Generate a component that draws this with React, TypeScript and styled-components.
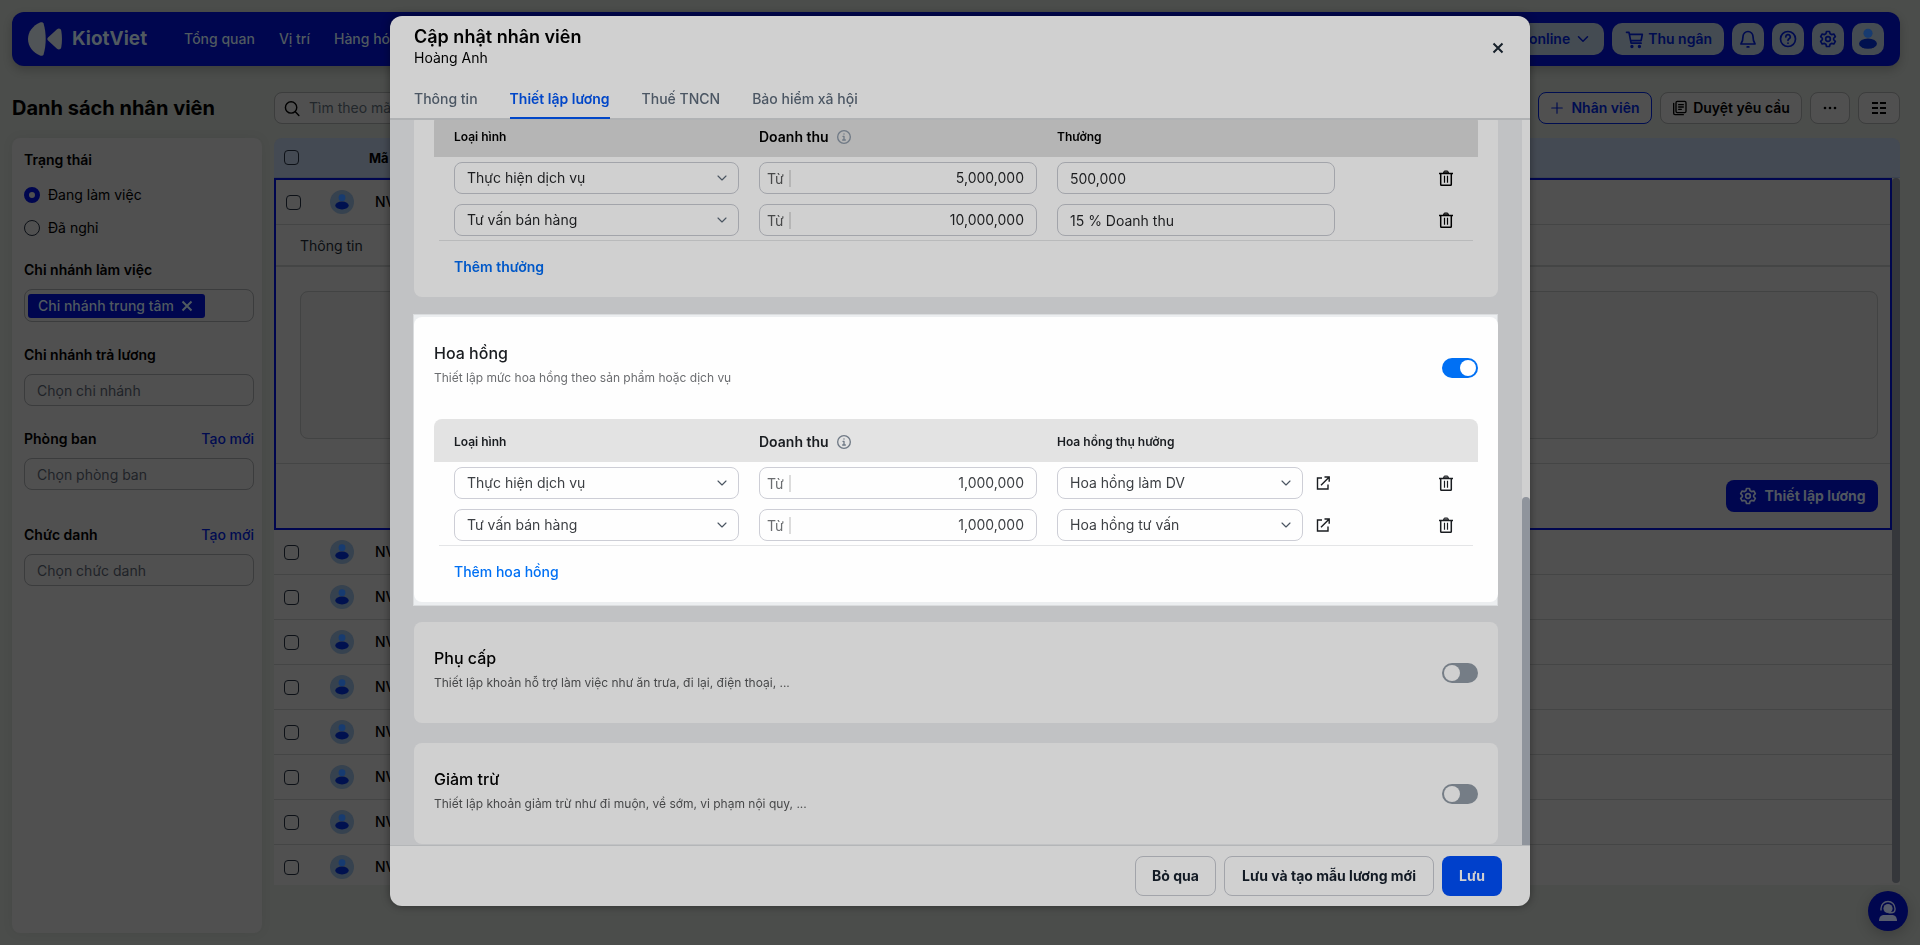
import React from "react";
import styled, { createGlobalStyle, css } from "styled-components";

const Global = createGlobalStyle`
  *, *::before, *::after { box-sizing: border-box; }
  html, body { height: 100%; }
  body {
    margin: 0;
    overflow: hidden;
    background: #4b4d4b;
    font-family: Inter, "Liberation Sans", sans-serif;
    font-size: 14px;
    line-height: 20px;
    color: #000;
  }
  button, input, select { font: inherit; color: inherit; margin: 0; }
  button { cursor: pointer; }
  h1, h2, h3, p, fieldset { margin: 0; padding: 0; border: 0; }
  svg { display: block; flex: none; }
  a { text-decoration: none; }
`;

const navy = "#00064f";

/* ---------- icons ---------- */

type IconProps = { size?: number; w?: number };
const Svg = ({ size = 20, w = 2, children }: IconProps & { children: React.ReactNode }) => (
  <svg width={size} height={size} viewBox="0 0 24 24" fill="none" stroke="currentColor" strokeWidth={w} strokeLinecap="round" strokeLinejoin="round" aria-hidden="true">
    {children}
  </svg>
);
const Chevron = (p: IconProps) => <Svg {...p}><path d="M6 9l6 6 6-6" /></Svg>;
const Cart = () => (
  <Svg size={20} w={2}>
    <path d="M3 4h3l2.500 13h12M6.500 6.500H22L20.500 14H8" /><circle cx="9.500" cy="21" r="1" fill="currentColor" /><circle cx="18.500" cy="21" r="1" fill="currentColor" />
  </Svg>
);
const Bell = () => (
  <Svg size={20} w={2}>
    <path d="M12 3a6 6 0 0 0-6 6c0 4.500-1 7-2.500 9h17C19 16 18 13.500 18 9a6 6 0 0 0-6-6zM11 21.500h2" />
  </Svg>
);
const Help = () => (
  <Svg size={20} w={2}>
    <circle cx="12" cy="12" r="9" /><path d="M9.300 9.500a2.700 2.700 0 1 1 4 2.300c-.9.500-1.300 1-1.300 2M12 16.800v.2" />
  </Svg>
);
const Gear = () => (
  <Svg size={20} w={2}>
    <circle cx="12" cy="12" r="2.800" />
    <path d="M10.200 3h3.600l.7 2.700 1.800 1 2.700-.7 1.800 3.100-2 2v1.800l2 2-1.800 3.100-2.700-.7-1.800 1-.7 2.700h-3.600l-.7-2.700-1.800-1-2.700.7-1.800-3.100 2-2v-1.800l-2-2L5 6l2.700.7 1.800-1z" />
  </Svg>
);
const Search = () => <Svg size={17} w={2}><circle cx="10" cy="10.500" r="8" /><path d="M16 16.500L21 22" /></Svg>;
const Plus = () => <Svg size={14} w={2}><path d="M12 3v18M3 12h18" /></Svg>;
const Docs = () => (
  <Svg size={16} w={2}>
    <rect x="6" y="2" width="15" height="17" rx="2" /><path d="M2.500 5v15a2 2 0 0 0 2 2H17M10 7h7M10 10.500h7M10 14h4" />
  </Svg>
);
const Dots = () => (
  <svg width="14" height="14" viewBox="0 0 14 14" aria-hidden="true"><circle cx="2" cy="7" r="1.300" /><circle cx="7" cy="7" r="1.300" /><circle cx="12" cy="7" r="1.300" /></svg>
);
const Columns = () => (
  <svg width="16" height="14" viewBox="0 0 16 14" aria-hidden="true"><path d="M1 1h6v2H1zM9 1h6v2H9zM1 6h6v2H1zM9 6h6v2H9zM1 11h6v2H1zM9 11h6v2H9z" /></svg>
);
const Cross = ({ size = 12 }: IconProps) => (
  <svg width={size} height={size} viewBox="0 0 12 12" fill="none" stroke="currentColor" strokeWidth="2" aria-hidden="true"><path d="M1.500 1.500l9 9M10.500 1.500l-9 9" /></svg>
);
const Info = () => (
  <Svg size={16} w={2}><circle cx="12" cy="12" r="9.500" /><path d="M10.500 11H12v5.500M10 16.500h4M12 7.200v.3" /></Svg>
);
const External = () => (
  <svg width="14" height="14" viewBox="0 0 14 14" fill="none" stroke="currentColor" strokeWidth="1.400" aria-hidden="true">
    <path d="M6 2H1.500v11h10.500V8.500M8.500 1h4.700v4.700M13 1.200L5 9.200" />
  </svg>
);
const Trash = () => (
  <svg width="14" height="16" viewBox="0 0 14 16" fill="none" stroke="currentColor" aria-hidden="true">
    <path d="M0 3.500h14M1.700 3.500v11q0 .8.800.8h9q.8 0 .8-.8v-11" strokeWidth="1.500" />
    <path d="M5.500 5.800v7M8.500 5.800v7" strokeWidth="1.200" />
    <path d="M4.500 3l.8-2h3.400l.8 2z" fill="currentColor" fillOpacity="0.500" strokeWidth="1" />
  </svg>
);
const Logo = () => (
  <svg width="34" height="34" viewBox="0 0 34 34" fill="#505457" aria-hidden="true">
    <path d="M12 .4C5 3.500 0 9.500 0 17s5 13.500 12 16.600c1.500.6 3 .2 3.600-1.200 2.800-9.600 2.800-21.200 0-30.800C15 .2 13.500-.2 12 .4z" />
    <path d="M20 15.500l9-8.300c1.800-1.500 3.800-.7 4.300 1.500.9 5.500.9 11.100 0 16.600-.5 2.200-2.500 3-4.300 1.500l-9-8.300c-.9-.8-.9-2.200 0-3z" />
  </svg>
);
const Person = ({ size = 24 }: IconProps) => (
  <svg width={size} height={size} viewBox="0 0 24 24" aria-hidden="true">
    <circle cx="12" cy="7.700" r="3.400" fill="#173b70" /><ellipse cx="12" cy="15.500" rx="6.700" ry="3.900" fill="#00114f" />
  </svg>
);
const Agent = () => (
  <svg width="20" height="22" viewBox="0 0 20 22" aria-hidden="true">
    <circle cx="10" cy="8.500" r="4.600" fill="#565b6b" />
    <path d="M3 10.500V8.500a7 7 0 0 1 14 0v1c0 2-1.500 3.200-4 3.200H10.500" fill="none" stroke="#565b6b" strokeWidth="1.400" />
    <path d="M1 21c0-4 2-6 5-6h8c3 0 5 2 5 6z" fill="#565b6b" />
  </svg>
);

/* ---------- page behind the dialog ---------- */

const Page = styled.div`
  height: 100vh;
  display: flex;
  flex-direction: column;
  padding: 12px 20px 12px 12px;
`;
const TopBar = styled.header`
  display: flex;
  align-items: center;
  height: 54px;
  flex: none;
  padding: 0 16px;
  border-radius: 12px;
  background: ${navy};
  color: #505a60;
  box-shadow: 0 4px 10px rgba(0, 0, 0, 0.2);
`;
const Brand = styled.a`
  display: flex;
  align-items: center;
  gap: 10px;
  color: #505a60;
  font-size: 19px;
  font-weight: 700;
`;
const Nav = styled.nav`
  display: flex;
  gap: 24px;
  margin-left: 37px;
  a { color: inherit; font-weight: 500; }
`;
const TopActions = styled.div`
  display: flex;
  gap: 8px;
  margin-left: auto;
`;
const TopButton = styled.button<{ $square?: boolean }>`
  display: flex;
  align-items: center;
  justify-content: center;
  gap: 4px;
  height: 32px;
  width: ${(p) => (p.$square ? "32px" : "auto")};
  padding: ${(p) => (p.$square ? "0" : "0 12px")};
  border: 0;
  border-radius: 10px;
  background: #444b52;
  color: #000b50;
  font-weight: 600;
`;
const Main = styled.div`
  flex: 1;
  min-height: 0;
  display: grid;
  grid-template-columns: 250px minmax(0, 1fr);
  grid-template-rows: 32px minmax(0, 1fr);
  gap: 14px 12px;
  padding-top: 26px;
`;
const PageTitle = styled.h1`
  font-size: 20px;
  line-height: 32px;
  font-weight: 700;
  white-space: nowrap;
`;
const Tools = styled.div`
  display: flex;
  gap: 8px;
`;
const SearchBox = styled.label`
  display: flex;
  align-items: center;
  gap: 6px;
  width: 400px;
  height: 32px;
  margin-right: auto;
  padding: 0 9px;
  border: 1px solid #3c3d3d;
  border-radius: 8px;
  background: #505050;
  input {
    flex: 1;
    border: 0;
    background: none;
    outline: none;
    &::placeholder { color: #22272b; opacity: 1; }
  }
`;
const ToolButton = styled.button<{ $accent?: boolean; $width: number }>`
  display: flex;
  align-items: center;
  justify-content: center;
  gap: ${(p) => (p.$accent ? 7 : 5)}px;
  width: ${(p) => p.$width}px;
  height: 32px;
  padding: 0;
  border: 1px solid ${(p) => (p.$accent ? "#000d50" : "#3c3d3d")};
  border-radius: 8px;
  background: #505050;
  color: ${(p) => (p.$accent ? "#000d50" : "#000")};
  font-weight: 600;
`;
const Sidebar = styled.aside`
  padding: 12px 8px 12px 12px;
  border-radius: 8px;
  background: #505050;
  box-shadow: 0 0 12px rgba(0, 0, 0, 0.06);
`;
const Group = styled.fieldset<{ $gap: number }>`
  min-width: 0;
  margin-bottom: ${(p) => p.$gap}px;
`;
const GroupHead = styled.div<{ $tight?: boolean }>`
  display: flex;
  justify-content: space-between;
  margin-bottom: ${(p) => (p.$tight ? 8 : 9)}px;
  line-height: 20px;
  label, span { font-weight: 600; }
  a { color: #000b50; font-weight: 500; }
`;
const RadioLine = styled.label`
  display: flex;
  align-items: center;
  gap: 8px;
  height: 33px;
`;
const Radio = styled.input`
  appearance: none;
  width: 16px;
  height: 16px;
  border: 1px solid #0d1117;
  border-radius: 50%;
  &:checked { border: 5px solid ${navy}; background: #505050; }
`;
const Field = styled.input`
  display: block;
  width: 100%;
  height: 32px;
  padding: 0 12px;
  border: 1px solid #3b3c3d;
  border-radius: 8px;
  background: none;
  &::placeholder { color: #1f2328; opacity: 1; }
`;
const TagBox = styled.div`
  display: flex;
  align-items: center;
  height: 33px;
  padding: 0 3px;
  border: 1px solid #3b3c3d;
  border-radius: 8px;
`;
const Tag = styled.span`
  display: flex;
  align-items: center;
  gap: 7px;
  height: 24px;
  padding: 0 12px 0 10px;
  border-radius: 3px;
  background: ${navy};
  color: #505a60;
  font-weight: 500;
  button { display: flex; padding: 0; border: 0; background: none; color: inherit; }
`;
const Grid = styled.div`
  align-self: start;
  height: 747px;
  overflow: hidden;
  border-radius: 8px 8px 0 0;
`;
const GridHead = styled.div`
  display: flex;
  align-items: center;
  height: 40px;
  padding-left: 10px;
  border-bottom: 1px solid #3b4350;
  background: #444a53;
  font-size: 13px;
  font-weight: 700;
`;
const GridBody = styled.div`
  display: flex;
  background: #505050;
`;
const Rows = styled.div`
  flex: 1;
  min-width: 0;
`;
const GridScroll = styled.div`
  width: 8px;
  height: 705px;
  border-radius: 4px;
  background: #35373b;
`;
const Check = styled.input`
  appearance: none;
  width: 15px;
  height: 15px;
  border: 1px solid #0d1117;
  border-radius: 4px;
`;
const HeadLabel = styled.span`
  margin-left: 70px;
`;
const Avatar = styled.span`
  display: flex;
  border-radius: 50%;
  background: #36424f;
`;
const Row = styled.div<{ $framed?: boolean }>`
  display: grid;
  grid-template-columns: ${(p) => (p.$framed ? 44 : 46)}px 45px 1fr;
  align-items: center;
  justify-items: start;
  height: 45px;
  padding-left: 10px;
  border-bottom: 1px solid #444545;
  font-weight: 500;
`;
const Selected = styled.div`
  height: 352px;
  border: 2px solid ${navy};
`;
const SelectedTab = styled.div`
  height: 42px;
  padding: 11px 24px 0;
  border-bottom: 2px solid #444545;
  color: #0b0e12;
`;
const DetailBox = styled.div`
  height: 148px;
  margin: 24px 12px 24px 24px;
  border: 1px solid #424343;
  border-radius: 8px;
  background: #4e4e4e;
`;
const DetailFoot = styled.div`
  display: flex;
  justify-content: flex-end;
  padding: 16px 12px;
  border-top: 1px solid #444545;
`;
const PayButton = styled.button`
  display: flex;
  align-items: center;
  justify-content: center;
  gap: 6px;
  width: 152px;
  height: 32px;
  padding: 0;
  border: 0;
  border-radius: 8px;
  background: ${navy};
  color: #50565f;
  font-weight: 700;
`;
const ChatButton = styled.button`
  position: fixed;
  right: 12px;
  bottom: 14px;
  display: flex;
  align-items: center;
  justify-content: center;
  width: 40px;
  height: 40px;
  padding: 0;
  border: 0;
  border-radius: 50%;
  background: ${navy};
  box-shadow: 0 4px 14px rgba(0, 0, 0, 0.2);
`;

/* ---------- dialog ---------- */

const Overlay = styled.div`
  position: fixed;
  inset: 0;
  display: flex;
  justify-content: center;
  padding: 16px 20px 39px;
`;
const Dialog = styled.section`
  display: flex;
  flex-direction: column;
  width: 1140px;
  max-width: 100%;
  overflow: hidden;
  border-radius: 12px;
  background: #d0d0d0;
  box-shadow: 0 0 8px rgba(0, 0, 0, 0.4);
`;
const DialogHead = styled.div`
  display: flex;
  align-items: flex-start;
  justify-content: space-between;
  height: 65px;
  padding: 9px 24px 0;
  h2 { font-size: 18px; line-height: 24px; font-weight: 600; }
  p { line-height: 18px; }
`;
const CloseButton = styled.button`
  display: flex;
  margin-top: 15px;
  padding: 2px;
  border: 0;
  background: none;
  color: #16202a;
`;
const Tabs = styled.nav`
  display: flex;
  gap: 32px;
  height: 39px;
  padding: 0 24px;
  border-bottom: 2px solid #b0b2b4;
`;
const Tab = styled.a<{ $active?: boolean }>`
  height: 38px;
  line-height: 36px;
  font-weight: ${(p) => (p.$active ? 600 : 500)};
  color: ${(p) => (p.$active ? "#0046c8" : "#4b5663")};
  border-bottom: 2px solid ${(p) => (p.$active ? "#0046c8" : "transparent")};
`;
const Body = styled.div`
  flex: 1;
  min-height: 0;
  display: flex;
  background: #c1c2c4;
`;
const Cards = styled.div`
  flex: 1;
  min-width: 0;
  display: flex;
  flex-direction: column;
  justify-content: flex-end;
  gap: 20px;
  padding: 0 24px 1px;
  overflow: hidden;
`;
const Track = styled.div`
  display: flex;
  flex-direction: column;
  justify-content: flex-end;
  width: 8px;
  background: #d0d0d0;
`;
const Thumb = styled.div`
  height: 48%;
  border-radius: 4px 4px 0 0;
  background: #8f949c;
`;
const Card = styled.section`
  flex: none;
  padding: 0 20px;
  border-radius: 8px;
  background: #d0d0d0;
`;
const Spotlight = styled.div`
  flex: none;
  margin: -3px 0 -4px -1px;
  padding: 3px 0 4px 1px;
  background: #eceef0;
  box-shadow: inset 0 0 0 1px #dadcde;
`;
const LitCard = styled(Card)`
  background: #fefefe;
  color: #1a1d21;
`;
const CardHead = styled.div<{ $lit?: boolean }>`
  display: flex;
  align-items: center;
  justify-content: space-between;
  height: ${(p) => (p.$lit ? 102 : 101)}px;
  h3 { font-size: 16px; line-height: 22px; font-weight: 500; }
  p { margin-top: 5px; font-size: 12px; line-height: 18px; }
`;
const HeadText = styled.div<{ $lit?: boolean }>`
  padding-bottom: ${(p) => (p.$lit ? 8 : 6)}px;
  p { color: ${(p) => (p.$lit ? "#6b6d70" : "#474849")}; }
`;
const Switch = styled.input`
  appearance: none;
  display: flex;
  width: 36px;
  height: 20px;
  padding: 2px;
  border-radius: 10px;
  background: #757d86;
  &::before { content: ""; width: 16px; height: 16px; border-radius: 50%; background: #d0d0d0; }
  &:checked { justify-content: flex-end; background: #0070f4; }
  &:checked::before { background: #fff; }
`;
const Table = styled.table<{ $lit?: boolean }>`
  width: 100%;
  border-collapse: collapse;
  table-layout: fixed;
  th {
    height: 43px;
    padding: 2px 10px 0;
    background: ${(p) => (p.$lit ? "#e3e3e3" : "#b5b5b5")};
    font-size: 12px;
    font-weight: 600;
    text-align: left;
  }
  td { height: 42px; padding: 5px 10px; }
  th:first-child, td:first-child { padding-left: 20px; }
  th:first-child { border-top-left-radius: 8px; }
  th:last-child { border-top-right-radius: 8px; }
`;
const RevenueHead = styled.span`
  display: flex;
  align-items: center;
  gap: 7px;
  font-size: 14px;
  svg { color: #6f7985; }
`;
const boxed = css<{ $lit?: boolean }>`
  height: 32px;
  border: 1px solid ${(p) => (p.$lit ? "#cdced6" : "#a2a4aa")};
  border-radius: 8px;
  background: none;
  color: ${(p) => (p.$lit ? "#3c3f43" : "#1c1d1f")};
`;
const SelectWrap = styled.div`
  position: relative;
  flex: 1;
  svg { position: absolute; right: 9px; top: 8px; pointer-events: none; color: #4a5561; }
`;
const Select = styled.select<{ $lit?: boolean }>`
  ${boxed}
  display: block;
  appearance: none;
  width: 100%;
  padding: 0 12px;
`;
const Amount = styled.label<{ $lit?: boolean }>`
  ${boxed}
  display: flex;
  align-items: center;
  padding: 0 12px 0 7px;
  span {
    padding-right: 5px;
    border-right: 2px solid ${(p) => (p.$lit ? "#dcdcdc" : "#b5b5b5")};
    line-height: 17px;
    color: ${(p) => (p.$lit ? "#6b6d70" : "#474849")};
  }
  input { flex: 1; min-width: 0; padding: 0; border: 0; background: none; text-align: right; }
`;
const Plain = styled.input<{ $lit?: boolean }>`
  ${boxed}
  display: block;
  width: 100%;
  padding: 0 12px;
`;
const Linked = styled.div`
  display: flex;
  align-items: center;
  gap: 13px;
  padding-right: 5px;
`;
const IconButton = styled.button`
  display: flex;
  padding: 0;
  border: 0;
  background: none;
  color: inherit;
`;
const TrashCell = styled.div`
  display: flex;
  justify-content: flex-end;
  padding-right: 15px;
`;
const AddLine = styled.div<{ $lit?: boolean }>`
  display: flex;
  align-items: center;
  height: 57px;
  margin: -1px 5px 0;
  padding: 0 15px 4px;
  border-top: 1px solid ${(p) => (p.$lit ? "#e4e5e7" : "#b9babb")};
  button {
    padding: 0;
    border: 0;
    background: none;
    color: ${(p) => (p.$lit ? "#0070f4" : "#0058c8")};
    font-weight: ${(p) => (p.$lit ? 500 : 600)};
  }
`;
const Foot = styled.footer`
  display: flex;
  justify-content: flex-end;
  gap: 8px;
  height: 61px;
  padding: 10px 28px 0;
  border-top: 1px solid #b4b6b8;
`;
const FootButton = styled.button<{ $primary?: boolean; $width: number }>`
  width: ${(p) => p.$width}px;
  height: 40px;
  padding: 0;
  border: ${(p) => (p.$primary ? "0" : "1px solid #a2a4aa")};
  border-radius: 8px;
  background: ${(p) => (p.$primary ? "#0040cb" : "none")};
  color: ${(p) => (p.$primary ? "#d0d0d0" : "#121a24")};
  font-weight: 700;
`;

type Line = { kind: string; from: string; reward: string };

const bonusLines: Line[] = [
  { kind: "Thực hiện dịch vụ", from: "5,000,000", reward: "500,000" },
  { kind: "Tư vấn bán hàng", from: "10,000,000", reward: "15 % Doanh thu" },
];
const commissionLines: Line[] = [
  { kind: "Thực hiện dịch vụ", from: "1,000,000", reward: "Hoa hồng làm DV" },
  { kind: "Tư vấn bán hàng", from: "1,000,000", reward: "Hoa hồng tư vấn" },
];

const Picker = ({ value, label, lit }: { value: string; label: string; lit?: boolean }) => (
  <SelectWrap>
    <Select $lit={lit} aria-label={label} defaultValue={value}>
      <option>{value}</option>
    </Select>
    <Chevron size={16} w={1.7} />
  </SelectWrap>
);

const PayTable = ({ lines, rewardLabel, lit }: { lines: Line[]; rewardLabel: string; lit?: boolean }) => (
  <Table $lit={lit}>
    <colgroup>
      <col width="315" />
      <col width="298" />
      <col width="298" />
      <col />
    </colgroup>
    <thead>
      <tr>
        <th>Loại hình</th>
        <th><RevenueHead>Doanh thu <Info /></RevenueHead></th>
        <th>{rewardLabel}</th>
        <th aria-label="Xóa" />
      </tr>
    </thead>
    <tbody>
      {lines.map((line) => (
        <tr key={line.kind}>
          <td><Picker lit={lit} value={line.kind} label="Loại hình" /></td>
          <td><Amount $lit={lit}><span>Từ</span><input aria-label="Doanh thu" defaultValue={line.from} /></Amount></td>
          <td>
            {lit ? (
              <Linked>
                <Picker lit value={line.reward} label={rewardLabel} />
                <IconButton aria-label="Mở"><External /></IconButton>
              </Linked>
            ) : (
              <Plain aria-label={rewardLabel} defaultValue={line.reward} />
            )}
          </td>
          <td><TrashCell><IconButton aria-label="Xóa"><Trash /></IconButton></TrashCell></td>
        </tr>
      ))}
    </tbody>
  </Table>
);

const SectionHead = ({ title, note, on }: { title: string; note: string; on?: boolean }) => (
  <CardHead $lit={on}>
    <HeadText $lit={on}>
      <h3>{title}</h3>
      <p>{note}</p>
    </HeadText>
    <Switch type="checkbox" role="switch" aria-label={title} defaultChecked={on} />
  </CardHead>
);

const StaffRow = ({ framed }: { framed?: boolean }) => (
  <Row $framed={framed}>
    <Check type="checkbox" aria-label="Chọn nhân viên" />
    <Avatar><Person /></Avatar>
    <span>NV</span>
  </Row>
);

export default function App() {
  return (
    <>
      <Global />
      <Page>
        <TopBar>
          <Brand href="#"><Logo />KiotViet</Brand>
          <Nav>
            <a href="#">Tổng quan</a>
            <a href="#">Vị trí</a>
            <a href="#">Hàng hóa</a>
          </Nav>
          <TopActions>
            <TopButton>Bán online <Chevron size={18} w={2} /></TopButton>
            <TopButton><Cart />Thu ngân</TopButton>
            <TopButton $square aria-label="Thông báo"><Bell /></TopButton>
            <TopButton $square aria-label="Trợ giúp"><Help /></TopButton>
            <TopButton $square aria-label="Thiết lập"><Gear /></TopButton>
            <TopButton $square aria-label="Tài khoản"><Person size={32} /></TopButton>
          </TopActions>
        </TopBar>
        <Main>
          <PageTitle>Danh sách nhân viên</PageTitle>
          <Tools>
            <SearchBox><Search /><input aria-label="Tìm kiếm" placeholder="Tìm theo mã, tên nhân viên" /></SearchBox>
            <ToolButton $accent $width={114}><Plus />Nhân viên</ToolButton>
            <ToolButton $width={142}><Docs />Duyệt yêu cầu</ToolButton>
            <ToolButton $width={40} aria-label="Thêm"><Dots /></ToolButton>
            <ToolButton $width={42} aria-label="Cột hiển thị"><Columns /></ToolButton>
          </Tools>
          <Sidebar>
            <Group $gap={16}>
              <GroupHead $tight><span>Trạng thái</span></GroupHead>
              <RadioLine><Radio type="radio" name="status" defaultChecked />Đang làm việc</RadioLine>
              <RadioLine><Radio type="radio" name="status" />Đã nghỉ</RadioLine>
            </Group>
            <Group $gap={23}>
              <GroupHead><span>Chi nhánh làm việc</span></GroupHead>
              <TagBox><Tag>Chi nhánh trung tâm <button aria-label="Bỏ chọn"><Cross size={12} /></button></Tag></TagBox>
            </Group>
            <Group $gap={23}>
              <GroupHead><label htmlFor="branch">Chi nhánh trả lương</label></GroupHead>
              <Field id="branch" placeholder="Chọn chi nhánh" />
            </Group>
            <Group $gap={35}>
              <GroupHead><label htmlFor="dept">Phòng ban</label><a href="#">Tạo mới</a></GroupHead>
              <Field id="dept" placeholder="Chọn phòng ban" />
            </Group>
            <Group $gap={0}>
              <GroupHead><label htmlFor="role">Chức danh</label><a href="#">Tạo mới</a></GroupHead>
              <Field id="role" placeholder="Chọn chức danh" />
            </Group>
          </Sidebar>
          <Grid>
            <GridHead><Check type="checkbox" aria-label="Chọn tất cả" /><HeadLabel>Mã nhân viên</HeadLabel></GridHead>
            <GridBody>
              <Rows>
                <Selected>
                  <StaffRow framed />
                  <SelectedTab>Thông tin</SelectedTab>
                  <DetailBox />
                  <DetailFoot><PayButton><Gear />Thiết lập lương</PayButton></DetailFoot>
                </Selected>
                {Array.from({ length: 8 }, (_, i) => <StaffRow key={i} />)}
              </Rows>
              <GridScroll />
            </GridBody>
          </Grid>
        </Main>
      </Page>
      <ChatButton aria-label="Hỗ trợ"><Agent /></ChatButton>

      <Overlay>
        <Dialog role="dialog" aria-labelledby="dialog-title">
          <DialogHead>
            <div>
              <h2 id="dialog-title">Cập nhật nhân viên</h2>
              <p>Hoàng Anh</p>
            </div>
            <CloseButton aria-label="Đóng"><Cross size={12} /></CloseButton>
          </DialogHead>
          <Tabs>
            <Tab href="#">Thông tin</Tab>
            <Tab href="#" $active>Thiết lập lương</Tab>
            <Tab href="#">Thuế TNCN</Tab>
            <Tab href="#">Bảo hiểm xã hội</Tab>
          </Tabs>
          <Body>
            <Cards>
              <Card>
                <PayTable lines={bonusLines} rewardLabel="Thưởng" />
                <AddLine><button>Thêm thưởng</button></AddLine>
              </Card>
              <Spotlight>
                <LitCard>
                  <SectionHead on title="Hoa hồng" note="Thiết lập mức hoa hồng theo sản phẩm hoặc dịch vụ" />
                  <PayTable lit lines={commissionLines} rewardLabel="Hoa hồng thụ hưởng" />
                  <AddLine $lit><button>Thêm hoa hồng</button></AddLine>
                </LitCard>
              </Spotlight>
              <Card>
                <SectionHead title="Phụ cấp" note="Thiết lập khoản hỗ trợ làm việc như ăn trưa, đi lại, điện thoại, ..." />
              </Card>
              <Card>
                <SectionHead title="Giảm trừ" note="Thiết lập khoản giảm trừ như đi muộn, về sớm, vi phạm nội quy, ..." />
              </Card>
            </Cards>
            <Track><Thumb /></Track>
          </Body>
          <Foot>
            <FootButton $width={81}>Bỏ qua</FootButton>
            <FootButton $width={210}>Lưu và tạo mẫu lương mới</FootButton>
            <FootButton $primary $width={60}>Lưu</FootButton>
          </Foot>
        </Dialog>
      </Overlay>
    </>
  );
}
